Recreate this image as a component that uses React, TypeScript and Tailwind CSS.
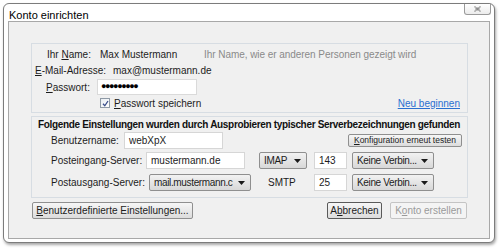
import React from "react";

function Caret() {
  return (
    <svg width="7" height="4" viewBox="0 0 7 4" className="shrink-0">
      <path d="M0 0h7L3.5 4z" fill="#1a1a1a" />
    </svg>
  );
}

function Input({ value, className }: { value: string; className: string }) {
  return (
    <div className={`flex items-center h-[17px] bg-white border border-[#d6d6d6] px-[4px] ${className}`}>
      {value}
    </div>
  );
}

function Dropdown({ label, className }: { label: string; className: string }) {
  return (
    <div
      className={`flex items-center h-[17px] pl-[4px] pr-[5px] rounded-[2px] border border-[#8f8f8f] bg-gradient-to-b from-[#f2f2f2] to-[#d8d8d8] ${className}`}
    >
      <span className="flex-1 min-w-0 overflow-hidden whitespace-nowrap tracking-[-0.35px]">{label}</span>
      <span className="ml-[3px]">
        <Caret />
      </span>
    </div>
  );
}

export default function App() {
  return (
    <div className="w-[500px] h-[248px] bg-white pl-[3px] pt-[3px] font-['Liberation_Sans',Arial,sans-serif] text-[10px] text-[#1c1c1c]">
      <div className="w-[492px] h-[240px] rounded-[6px] border border-[#7c7c7c] bg-white flex flex-col shadow-[1px_2px_3px_rgba(0,0,0,0.35)]">
        {/* title bar */}
        <div className="h-[17px] flex items-start shrink-0">
          <span className="mt-[3px] ml-[5px] text-[11px] text-black">Konto einrichten</span>
          <div className="ml-auto mr-[3px] w-[27px] h-[11px] border border-t-0 border-[#9a9a9a] rounded-b-[3px] bg-gradient-to-b from-white to-[#ececec] flex items-center justify-center">
            <svg width="7" height="6" viewBox="0 0 7 6">
              <path d="M0.5 0.5l6 5M6.5 0.5l-6 5" stroke="#8a8a8a" strokeWidth="1.2" />
              <rect x="1.5" y="1.5" width="4" height="3" fill="none" stroke="#b8b8b8" strokeWidth="0.8" />
            </svg>
          </div>
        </div>

        {/* content */}
        <div className="mx-[4px] mb-[3px] flex-1 border border-[#a8a8a8] bg-[#f0f0f0] pl-[22px] pt-[21px]">
          {/* group 1 */}
          <div className="w-[437px] h-[70px] border border-[#d7dde3] pt-[2px] flex flex-col">
            <div className="h-[16px] flex items-center">
              <span className="ml-[15px] w-[53px] shrink-0">
                Ihr <u>N</u>ame:
              </span>
              <span className="w-[104px] shrink-0">Max Mustermann</span>
              <span className="text-[#8a8a8a] tracking-[-0.05px]">Ihr Name, wie er anderen Personen gezeigt wird</span>
            </div>
            <div className="h-[17px] flex items-center">
              <span className="ml-[3px] w-[78px] shrink-0">
                <u>E</u>-Mail-Adresse:
              </span>
              <span>max@mustermann.de</span>
            </div>
            <div className="h-[16px] flex items-center">
              <span className="ml-[14px] w-[51px] shrink-0">
                <u>P</u>asswort:
              </span>
              <div className="w-[100px] h-[16px] bg-white border border-[#dadada] flex items-center pl-[3px] text-[9px] tracking-[-1.4px] text-black font-bold">
                ●●●●●●●●●
              </div>
            </div>
            <div className="h-[16px] flex items-center">
              <span className="ml-[68px] w-[10px] h-[10px] border border-[#8f9aa6] bg-gradient-to-br from-[#e9eef3] to-white flex items-center justify-center">
                <svg width="7" height="7" viewBox="0 0 7 7">
                  <path d="M1 3.8l1.8 2L6 1" stroke="#3b4f8c" strokeWidth="1.3" fill="none" />
                </svg>
              </span>
              <span className="ml-[4px]">
                <u>P</u>asswort speichern
              </span>
              <span className="ml-auto mr-[7px] text-[#2a6fd0] underline">Neu beginnen</span>
            </div>
          </div>

          {/* group 2 */}
          <div className="mt-[3px] w-[437px] h-[82px] border border-[#d7dde3] flex flex-col">
            <div className="h-[15px] flex items-center pl-[6px] font-bold text-[#111] whitespace-nowrap tracking-[-0.33px]">
              Folgende Einstellungen wurden durch Ausprobieren typischer Serverbezeichnungen gefunden
            </div>
            <div className="h-[17px] flex items-center">
              <span className="ml-[19px] w-[73px] shrink-0">Benutzername:</span>
              <Input value="webXpX" className="w-[99px]" />
              <div className="ml-auto mr-[5px] h-[13px] w-[114px] rounded-[2px] border border-[#8f8f8f] bg-gradient-to-b from-[#f6f6f6] to-[#dcdcdc] flex items-center justify-center text-[8.5px]">
                <u>K</u>onfiguration erneut testen
              </div>
            </div>
            <div className="mt-[3px] h-[17px] flex items-center">
              <span className="ml-[19px] w-[95px] shrink-0">Posteingang-Server:</span>
              <Input value="mustermann.de" className="w-[99px]" />
              <Dropdown label="IMAP" className="ml-[14px] w-[48px]" />
              <Input value="143" className="ml-[7px] w-[33px]" />
              <Dropdown label="Keine Verbin..." className="ml-[5px] w-[82px]" />
            </div>
            <div className="mt-[5px] h-[17px] flex items-center">
              <span className="ml-[19px] w-[98px] shrink-0">Postausgang-Server:</span>
              <Dropdown label="mail.mustermann.c" className="w-[102px]" />
              <span className="ml-[17px] w-[46px] shrink-0">SMTP</span>
              <Input value="25" className="w-[33px]" />
              <Dropdown label="Keine Verbin..." className="ml-[5px] w-[82px]" />
            </div>
          </div>

          {/* buttons */}
          <div className="mt-[4px] w-[437px] flex items-center">
            <div className="ml-[1px] h-[17px] w-[161px] rounded-[2px] border border-[#8f8f8f] bg-gradient-to-b from-[#f6f6f6] to-[#dcdcdc] flex items-center justify-center">
              <u>B</u>enutzerdefinierte Einstellungen...
            </div>
            <div className="ml-auto h-[17px] w-[55px] rounded-[2px] border border-[#5a5a5a] bg-gradient-to-b from-[#f6f6f6] to-[#dcdcdc] flex items-center justify-center">
              A<u>b</u>brechen
            </div>
            <div className="ml-[8px] mr-[1px] h-[17px] w-[77px] rounded-[2px] border border-[#c4c4c4] bg-[#f4f4f4] flex items-center justify-center text-[#9a9a9a]">
              K<u>o</u>nto erstellen
            </div>
          </div>
        </div>
      </div>
    </div>
  );
}
